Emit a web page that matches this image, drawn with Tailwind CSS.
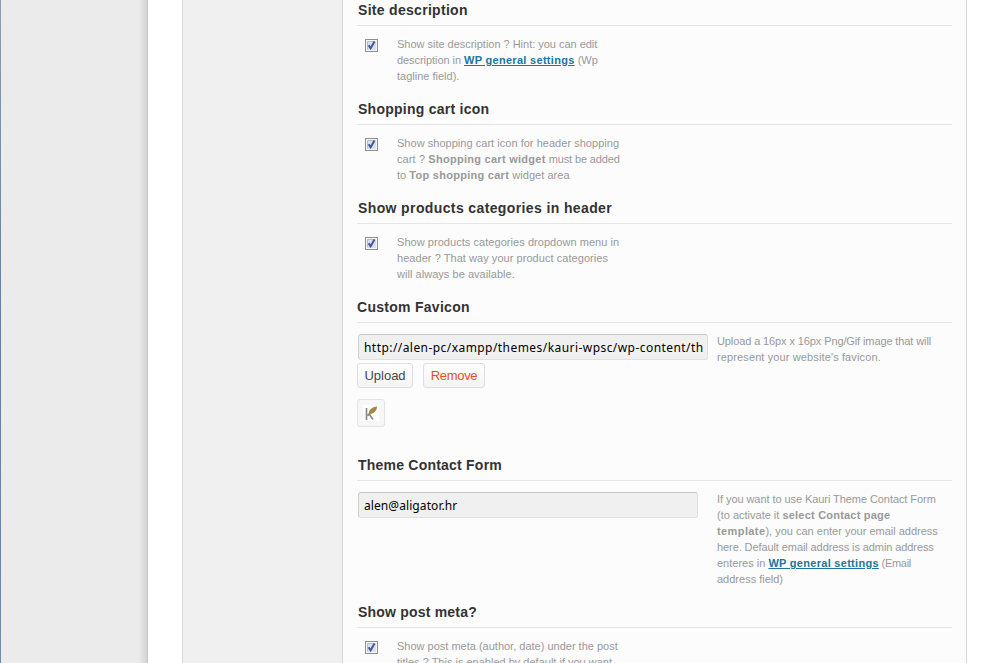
<!DOCTYPE html>
<html lang="en">
<head>
<meta charset="utf-8">
<title>Theme options</title>
<script src="https://cdn.jsdelivr.net/npm/@tailwindcss/browser@4"></script>
</head>
<body class="bg-white">
<svg class="hidden">
  <symbol id="check" viewBox="0 0 13 13">
    <rect x=".5" y=".5" width="12" height="12" fill="#f6f6f6" stroke="#8e8f8f"/>
    <path d="M2.5 10.500V2.500H10.500" fill="none" stroke="#b4bcc8"/>
    <rect x="3" y="3" width="8" height="8" fill="#dde1e7"/>
    <path d="M3.600 6.300L5.600 9.300L9.500 2.500" fill="none" stroke="#42599a" stroke-width="2"/>
  </symbol>
</svg>
<div class="flex h-[663px] overflow-hidden font-['Liberation_Sans',Arial,sans-serif]">
  <div class="w-px shrink-0 bg-gradient-to-b from-[#8c9db0] via-[#5f7f9f] to-[#6f8ba8]"></div>
  <div class="flex w-[147px] shrink-0 justify-end border-r border-[#c8c8c8] bg-[#ebebeb]">
    <div class="w-2 bg-gradient-to-r from-[#ebebeb] to-[#d2d2d2]"></div>
  </div>
  <div class="w-[34px] shrink-0"></div>
  <div class="w-[161px] shrink-0 border-x border-[#d6d6d6] bg-[#f0f0f0]"></div>
  <main class="w-[624px] shrink-0 border-r border-[#d6d6d6] bg-[#fcfcfc] pr-[14px] pl-[14px] text-[11px] leading-4 whitespace-nowrap text-[#999]">
    <section class="h-[99px]">
      <h3 class="h-[26px] border-b border-[#e5e5e5] pl-px text-sm leading-5 font-bold text-[#333]"><span class="tracking-[0.3px]">Site description</span></h3>
      <div class="flex pt-[10px] pl-[8px]">
        <svg class="mt-[3px] mr-[19px] size-[13px]"><use href="#check"/></svg>
        <p><span class="tracking-[-0.02px]">Show site description ? Hint: you can edit</span><br><span class="tracking-[-0.06px]">description in </span><a class="font-bold tracking-[0.3px] text-[#21759b] underline">WP general settings</a> (Wp<br>tagline field).</p>
      </div>
    </section>
    <section class="h-[99px]">
      <h3 class="h-[26px] border-b border-[#e5e5e5] pl-px text-sm leading-5 font-bold text-[#333]"><span class="tracking-[0.25px]">Shopping cart icon</span></h3>
      <div class="flex pt-[10px] pl-[8px]">
        <svg class="mt-[3px] mr-[19px] size-[13px]"><use href="#check"/></svg>
        <p><span class="tracking-[0.03px]">Show shopping cart icon for header shopping</span><br><span class="tracking-[0.1px]">cart ? </span><b class="tracking-[0.28px]">Shopping cart widget</b><span class="tracking-[-0.13px]"> must be added</span><br>to <b class="tracking-[0.28px]">Top shopping cart</b><span class="tracking-[0.05px]"> widget area</span></p>
      </div>
    </section>
    <section class="h-[99px]">
      <h3 class="h-[26px] border-b border-[#e5e5e5] pl-px text-sm leading-5 font-bold text-[#333]"><span class="tracking-[0.38px]">Show products categories in header</span></h3>
      <div class="flex pt-[10px] pl-[8px]">
        <svg class="mt-[3px] mr-[19px] size-[13px]"><use href="#check"/></svg>
        <p><span class="tracking-[0.05px]">Show products categories dropdown menu in</span><br><span class="tracking-[0.05px]">header ? That way your product categories</span><br><span class="tracking-[0.04px]">will always be available.</span></p>
      </div>
    </section>
    <section class="h-[158px]">
      <h3 class="h-[26px] border-b border-[#e5e5e5] text-sm leading-5 font-bold text-[#333]"><span class="tracking-[0.28px]">Custom Favicon</span></h3>
      <div class="flex pt-[10px]">
        <div class="w-[360px] pt-px">
          <div class="ml-px h-[26px] w-[350px] rounded-[3px] border border-[#e0e0e0] border-t-[#c6c6c6] border-l-[#cfcfcf] bg-[#f0f0f0] pl-[5px] font-['Noto_Sans',sans-serif] text-xs leading-[26px] text-black"><span class="tracking-[0.44px]">http://alen-pc/xampp/themes/kauri-wpsc/wp-content/th</span></div>
          <div class="mt-[3px] flex gap-[10px] text-[13px] leading-[23px]">
            <div class="h-[25px] w-[56px] rounded-[3px] border border-[#dfdfdf] bg-gradient-to-b from-white to-[#f4f4f4] text-center text-[#464646]">Upload</div>
            <div class="h-[25px] w-[62px] rounded-[3px] border border-[#dfdfdf] bg-gradient-to-b from-white to-[#f4f4f4] text-center tracking-[-0.3px] text-[#f04a23]">Remove</div>
          </div>
          <div class="mt-[11px] flex size-[28px] items-center justify-center rounded-[3px] border border-[#e3e3e3] bg-[#f7f7f7]">
            <svg class="size-4 bg-white" viewBox="0 0 16 16">
              <path d="M3.500 3V15M4.500 10.500L8 8M6.500 9.500L10 14.500" fill="none" stroke="#8c8c8c" stroke-width="1.700"/>
              <path d="M5.500 9.500C5.500 5 9 2 14 1.500C14 6 11 8.500 5.500 9.500Z" fill="#a08a3c"/>
            </svg>
          </div>
        </div>
        <p><span class="tracking-[-0.11px]">Upload a 16px x 16px Png/Gif image that will</span><br><span class="tracking-[0.12px]">represent your website's favicon.</span></p>
      </div>
    </section>
    <section class="h-[147px]">
      <h3 class="h-[26px] border-b border-[#e5e5e5] pl-px text-sm leading-5 font-bold text-[#333]"><span class="tracking-[0.22px]">Theme Contact Form</span></h3>
      <div class="flex pt-[10px]">
        <div class="w-[360px] pt-px">
          <div class="ml-px h-[26px] w-[340px] rounded-[3px] border border-[#e0e0e0] border-t-[#c6c6c6] border-l-[#cfcfcf] bg-[#f0f0f0] pl-[5px] font-['Noto_Sans',sans-serif] text-xs leading-[26px] text-black"><span class="tracking-[0.08px]">alen@aligator.hr</span></div>
        </div>
        <p><span class="tracking-[-0.07px]">If you want to use Kauri Theme Contact Form</span><br>(to activate it <b class="tracking-[0.21px]">select Contact page</b><br><b class="tracking-[0.4px]">template</b>), you can enter your email address<br><span class="tracking-[-0.09px]">here. Default email address is admin address</span><br>enteres in <a class="font-bold tracking-[0.29px] text-[#21759b] underline">WP general settings</a><span class="tracking-[-0.3px]"> (Email</span><br>address field)</p>
      </div>
    </section>
    <section class="h-[99px]">
      <h3 class="h-[26px] border-b border-[#e5e5e5] pl-px text-sm leading-5 font-bold text-[#333]"><span class="tracking-[0.2px]">Show post meta?</span></h3>
      <div class="flex pt-[10px] pl-[8px]">
        <svg class="mt-[3px] mr-[19px] size-[13px]"><use href="#check"/></svg>
        <p>Show post meta (author, date) under the post<br>titles ? This is enabled by default if you want</p>
      </div>
    </section>
  </main>
</div>
</body>
</html>
